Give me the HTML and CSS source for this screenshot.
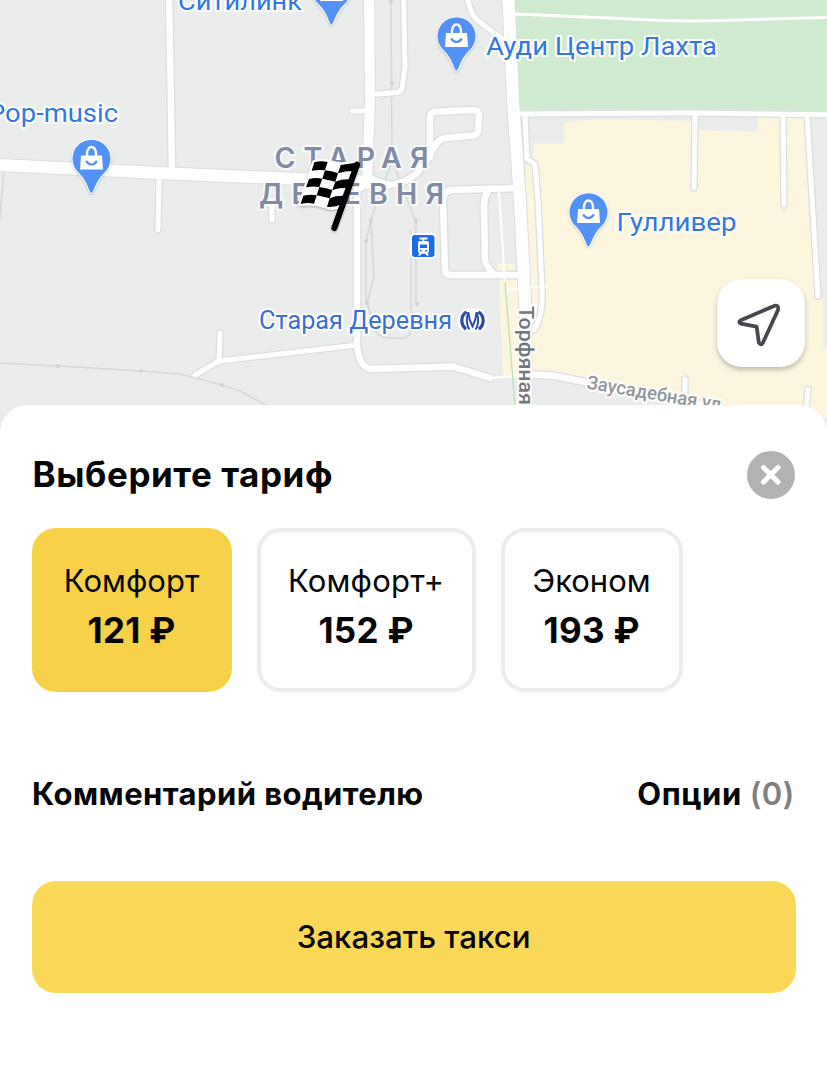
FILE: index.html
```
<!DOCTYPE html>
<html lang="ru">
<head>
<meta charset="utf-8">
<title>Выберите тариф</title>
<link rel="stylesheet" href="styles.css">
</head>
<body>
<main class="screen">
  <section class="map">
    <svg class="map-canvas" viewBox="0 0 827 436" width="827" height="436">
      <defs>
        <g id="roads-main">
          <path d="M508 -12 L513 100 L520 200 L525 300 L526 440"/>
          <path d="M-10 164.500 L170 173.500 L300 179 L372 182"/>
        </g>
        <g id="roads-wide">
          <path d="M369 -10 L370 100 L367 184"/>
        </g>
        <g id="roads-medium">
          <path d="M430 157 V118 Q430 111.500 437 111.500 L473 110 Q479 110 479 116 L478 130 Q478 135 473 135.500 L446 138 Q438 139 435 146 L426 162 L416 174 Q404 184 388 185 L374 180 L357 190 V345"/>
          <path d="M515 188 L452 190 Q443 191 443 200 L445 270 Q445 275 451 275 L520 275"/>
          <path d="M488 190 Q484 198 484 206 L485 260 Q487 268 493 273"/>
          <path d="M357 345 Q359 366 370 369 L453 366.500 L490 378"/>
          <path d="M169 -10 L172 172"/>
          <path d="M530 375 Q550 374 570 379 L700 404 L760 418"/>
        </g>
        <g id="roads-small">
          <path d="M403.500 -10 L405 68 L402 88 Q401 92 397 92.500 L373 94.500"/>
          <path d="M352 111 H367"/>
          <path d="M467 -8 Q468 10 477 20 L506 42"/>
          <path d="M159 180 L158 230"/>
          <path d="M272 200 V220"/>
          <path d="M357 345 L219 361 L195 375 M219 361 L220 333"/>
          <path d="M520 114 L690 113 L840 115"/>
          <path d="M525 116 L527 159 L535 164 L538 200 L542 290 Q543 317 534 330"/>
          <path d="M695 116 L694 188 M783 116 L784 205 M807 116 L818 296"/>
          <path d="M685 379 V400 M808 389 L806 410"/>
        </g>
        <g id="pin">
          <path class="pin-shape" d="M0 34.500 C-2.500 34.500 -2.500 25 -12.500 14.500 A19 19 0 1 1 12.500 14.500 C2.500 25 2.500 34.500 0 34.500Z"/>
          <path class="pin-bag" d="M-10.500 -3 H10.500 L11.500 11 H-11.500Z"/>
          <path class="pin-handle" d="M-4.500 -2 V-5 A4.500 6.500 0 0 1 4.500 -5 V-2"/>
          <path class="pin-smile" d="M-5.500 2.500 Q0 9.500 5.500 2.500"/>
        </g>
      </defs>

      <rect class="land" width="827" height="436"/>
      <path class="park" d="M513 0 H827 V113 H518Z"/>
      <path class="commercial" d="M526 165 L533 158 L534 143.500 H564 V122.500 L600 119 L692 121 L693 130 L757 131.500 L758 117 H806 L816 299 H823 V347 H827 V418 L760 418 L570 377 H503 L499 279 H497 V264 H515 V280 H526Z"/>

      <g class="rail">
        <path d="M0 363 L58 366 L141 371 L180 374 L222 385 L240 391 L268 406"/>
        <path d="M391 0 L392 160 L376 205 L371 220 L374 277 L367 303 L376 332 Q381 337 387 338 H405 Q411 336 411 328 V230"/>
        <path d="M371 220 L366 241 V303 M392 160 L416 222 V304"/>
        <path d="M4 171 L-1 226"/>
      </g>
      <g class="rail-stop">
        <circle cx="58" cy="366" r="2"/><circle cx="141" cy="371" r="2"/><circle cx="222" cy="385" r="2"/>
        <circle cx="391" cy="1" r="2"/><circle cx="392" cy="83" r="2"/><circle cx="371" cy="220" r="2"/>
        <circle cx="366" cy="241" r="2"/><circle cx="367" cy="303" r="2"/><circle cx="416" cy="221" r="2"/><circle cx="417" cy="304" r="2"/>
      </g>

      <g class="casing">
        <use href="#roads-small" stroke-width="7.500"/>
        <use href="#roads-medium" stroke-width="9"/>
        <use href="#roads-wide" stroke-width="12"/>
        <use href="#roads-main" stroke-width="14"/>
      </g>
      <g class="surface">
        <use href="#roads-small" stroke-width="5"/>
        <use href="#roads-medium" stroke-width="6.500"/>
        <use href="#roads-wide" stroke-width="10"/>
        <use href="#roads-main" stroke-width="12"/>
      </g>
      <path class="trail" d="M515 14 L620 18.500 Q680 22 720 20.500 L827 17.500"/>
      <path class="footpath" d="M499 192 L505 282 M505 290 L548 286 M490 378 L530 375"/>
      <path class="hedge" d="M505 282 L515 406"/>

      <g class="place">
        <text x="178" y="10" textLength="124" lengthAdjust="spacingAndGlyphs">Ситилинк</text>
        <text x="-12" y="122" textLength="130" lengthAdjust="spacingAndGlyphs">Pop-music</text>
        <text x="486" y="55" textLength="231" lengthAdjust="spacingAndGlyphs">Ауди Центр Лахта</text>
        <text x="616.500" y="231" textLength="120" lengthAdjust="spacingAndGlyphs">Гулливер</text>
        <text class="station" x="259" y="329" textLength="193" lengthAdjust="spacingAndGlyphs">Старая Деревня</text>
      </g>
      <g class="district">
        <text x="274.500" y="167.500" textLength="154">СТАРАЯ</text>
        <text x="259" y="203.500" textLength="185">ДЕРЕВНЯ</text>
      </g>
      <text class="street street-main" transform="translate(518.500 306) rotate(90)" textLength="99" lengthAdjust="spacingAndGlyphs">Торфяная</text>
      <text class="street" transform="translate(586 388.500) rotate(9.500)" textLength="141" lengthAdjust="spacingAndGlyphs">Заусадебная ул.</text>

      <use href="#pin" x="331.500" y="-10"/>
      <use href="#pin" x="456.500" y="36"/>
      <use href="#pin" x="91.500" y="158.500"/>
      <use href="#pin" x="588.500" y="212"/>

      <g transform="translate(412 235)">
        <rect class="tram-plate" x="-1" y="-1" width="24.500" height="24" rx="4"/>
        <path class="tram-line" d="M7.500 3.500 H15.500 M11.500 3.500 V7"/>
        <path class="tram-body" d="M8 6 H15 Q17 6 17 8 V16 Q17 18 15.500 18 L17 20.500 H14.500 L13.500 18.700 H9.500 L8.500 20.500 H6 L7.500 18 Q6 18 6 16 V8 Q6 6 8 6Z"/>
        <path class="tram-cut" d="M8 9.500 H15 V13 H8Z M8 15 h1.700 v1.500 h-1.700Z M13.300 15 h1.700 v1.500 h-1.700Z"/>
      </g>

      <g class="metro" transform="translate(460 309)">
        <path class="metro-halo" d="M6 1.500 C-2 7 -2 16 4 21 H21 C27 16 27 7 19 1.500Z"/>
        <path class="metro-arc" d="M6.500 2.800 C0.300 7 0.300 15.500 6 20.300 M18.500 2.800 C24.700 7 24.700 15.500 19 20.300"/>
        <path class="metro-m" d="M8.300 3 Q9 11 12.500 17.500 Q16 11 16.700 3 M8 4 C6 11 7 17 9.500 20.500 M17 4 C19 11 18 17 15.500 20.500"/>
      </g>

      <g class="flag" transform="translate(285 140) scale(.3333)">
        <path class="flag-halo" d="M88 67 Q110 60 130 66 Q165 80 213 68 L217 72 L148 265 L172 193 Q145 208 126 200 Q85 184 47 192Z"/>
        <path class="flag-cloth" d="M88 67 Q110 60 130 66 Q165 80 213 68 L172 193 Q145 208 126 200 Q85 184 47 192Z"/>
        <path d="M88 67 Q108 61 128 66 L120 91 Q100 88 80 92Z M167 75 L213 68 L205 93 Q180 93 159 100Z M120 91 Q142 93 159 100 L151 125 Q134 120 112 116Z M72 117 Q92 112 112 116 L103 141 Q83 138 63 142Z M151 125 Q172 116 197 118 L188 143 Q163 143 142 150Z M103 141 Q125 144 142 150 L134 175 Q116 170 95 166Z M55 167 Q75 162 95 166 L87 191 Q67 187 47 192Z M134 175 Q155 166 180 168 L172 193 Q145 203 126 200Z"/>
        <path class="flag-pole" d="M216 74 L148 264"/>
      </g>
    </svg>
    <button class="locate" aria-label="Моё местоположение">
      <svg viewBox="0 0 44 44" width="44" height="44">
        <path d="M37.200 2.900 L3.800 17.300 Q0.800 19 3.800 20.600 L19.600 23.600 L21.800 39.500 Q23.600 43.300 26 39.500 L41 7 Q42 1.700 37.200 2.900Z"/>
      </svg>
    </button>
  </section>

  <section class="sheet">
    <header class="sheet-head">
      <h1 class="title">Выберите тариф</h1>
      <button class="close" aria-label="Закрыть">
        <svg viewBox="0 0 48 48" width="48" height="48"><path d="M16.500 16.500 L31 31 M31 16.500 L16.500 31"/></svg>
      </button>
    </header>
    <div class="tariffs">
      <button class="tariff tariff-active"><span class="name">Комфорт</span><span class="price">121 ₽</span></button>
      <button class="tariff tariff-plus"><span class="name">Комфорт+</span><span class="price">152 ₽</span></button>
      <button class="tariff tariff-econom"><span class="name">Эконом</span><span class="price">193 ₽</span></button>
    </div>
    <div class="extras">
      <span class="comment">Комментарий водителю</span>
      <span class="options">Опции <span class="count">(0)</span></span>
    </div>
    <button class="order">Заказать такси</button>
  </section>
</main>
</body>
</html>
```

FILE: styles.css
```
* { box-sizing: border-box; }
body { margin: 0; background: #fff; font-family: Inter, "Liberation Sans", sans-serif; color: #050505; }
button { margin: 0; padding: 0; border: 0; font: inherit; color: inherit; }
.screen { width: 827px; height: 1065px; overflow: hidden; display: flex; flex-direction: column; }

.map { position: relative; height: 436px; flex: none; overflow: hidden; }
.map-canvas { display: block; }
.land { fill: #ebedec; }
.park { fill: #ceebd0; }
.commercial { fill: #fdf6df; }
.rail { fill: none; stroke: #d5d8d9; stroke-width: 1.5; }
.rail-stop { fill: #d0d3d4; }
.casing, .surface { fill: none; stroke-linecap: round; stroke-linejoin: round; }
.casing { stroke: #dcdee0; }
.surface { stroke: #fff; }
.trail { fill: none; stroke: #fff; stroke-width: 3; }
.footpath { fill: none; stroke: #fff; stroke-width: 2; }
.hedge { fill: none; stroke: #b9dfb5; stroke-width: 1.2; }

.place, .district, .street { font-family: Roboto, Inter, sans-serif; paint-order: stroke; stroke: #fff; stroke-width: 4px; stroke-linejoin: round; }
.place { font-size: 26.5px; fill: #3478de; }
.station { font-size: 25px; fill: #3b6fce; }
.district { font-family: Inter, Roboto, sans-serif; font-size: 28.5px; font-weight: 600; fill: #808ca4; stroke-opacity: .75; }
.street { font-size: 19px; font-weight: 500; fill: #92969a; }
.street-main { font-size: 20px; fill: #72777c; }

.pin-shape { fill: #5491f5; stroke: #fff; stroke-width: 2; paint-order: stroke; filter: drop-shadow(0 1px 1px rgba(0, 0, 0, .18)); }
.pin-bag { fill: #fff; }
.pin-handle { fill: none; stroke: #fff; stroke-width: 2.4; }
.pin-smile { fill: none; stroke: #5491f5; stroke-width: 2.2; }
.tram-plate { fill: #1a6fe8; stroke: #fff; stroke-width: 2; }
.tram-line { fill: none; stroke: #fff; stroke-width: 1.8; }
.tram-body { fill: #fff; }
.tram-cut { fill: #1a6fe8; }
.metro-halo { fill: #fff; stroke: #fff; stroke-width: 4; stroke-linejoin: round; }
.metro-arc, .metro-m { fill: none; stroke: #294e9d; stroke-width: 3.2; }
.metro-m { stroke-width: 2; }
.flag { filter: drop-shadow(0 3px 3px rgba(0, 0, 0, .3)); }
.flag-halo { fill: #fff; stroke: #fff; stroke-width: 14; stroke-linejoin: round; }
.flag-cloth { fill: #fff; }
.flag-pole { fill: none; stroke: #000; stroke-width: 18; stroke-linecap: round; }

.locate { position: absolute; right: 22px; top: 279px; width: 88px; height: 88px; display: grid; place-items: center; padding: 4px 4px 0 0; border-radius: 25px; background: #fff; box-shadow: 0 3px 5px rgba(0, 0, 0, .24); }
.locate path { fill: none; stroke: #45494f; stroke-width: 3.8; stroke-linejoin: round; }

.sheet { position: relative; z-index: 1; flex: 1; margin-top: -31px; padding: 46px 31.6px 0 31.6px; border-radius: 28px 28px 0 0; background: #fff; }
.sheet-head { display: flex; align-items: center; justify-content: space-between; height: 48px; }
.title { margin: 0; padding: 0 0 2px 1px; font-size: 35px; font-weight: 700; line-height: 46px; letter-spacing: .55px; }
.close { width: 48px; height: 48px; border-radius: 50%; background: #b2b2b2; }
.close svg { display: block; }
.close path { fill: none; stroke: #fff; stroke-width: 5; stroke-linecap: round; }
.tariffs { display: flex; gap: 25px; margin-top: 29px; }
.tariff { width: 200px; height: 164px; display: flex; flex-direction: column; align-items: center; padding-top: 25px; border: 4px solid #ededed; border-radius: 24px; background: #fff; }
.tariff-active { border-color: #f7d248; background: #f7d248; }
.tariff-plus { width: 219px; }
.tariff-econom { width: 182px; }
.name { font-size: 31px; line-height: 48px; white-space: nowrap; }
.tariff-plus .name { letter-spacing: .2px; }
.price { font-size: 35px; font-weight: 700; line-height: 50px; letter-spacing: .3px; white-space: nowrap; }
.extras { display: flex; justify-content: space-between; margin-top: 78px; padding: 0 .5px; font-size: 31px; font-weight: 700; line-height: 48px; white-space: nowrap; }
.comment { letter-spacing: .42px; }
.options { letter-spacing: .55px; }
.count { color: #808080; font-weight: 600; }
.order { display: block; width: 764px; height: 112px; margin-top: 63px; border-radius: 24px; background: #fad857; font-size: 31.3px; font-weight: 500; }
```
